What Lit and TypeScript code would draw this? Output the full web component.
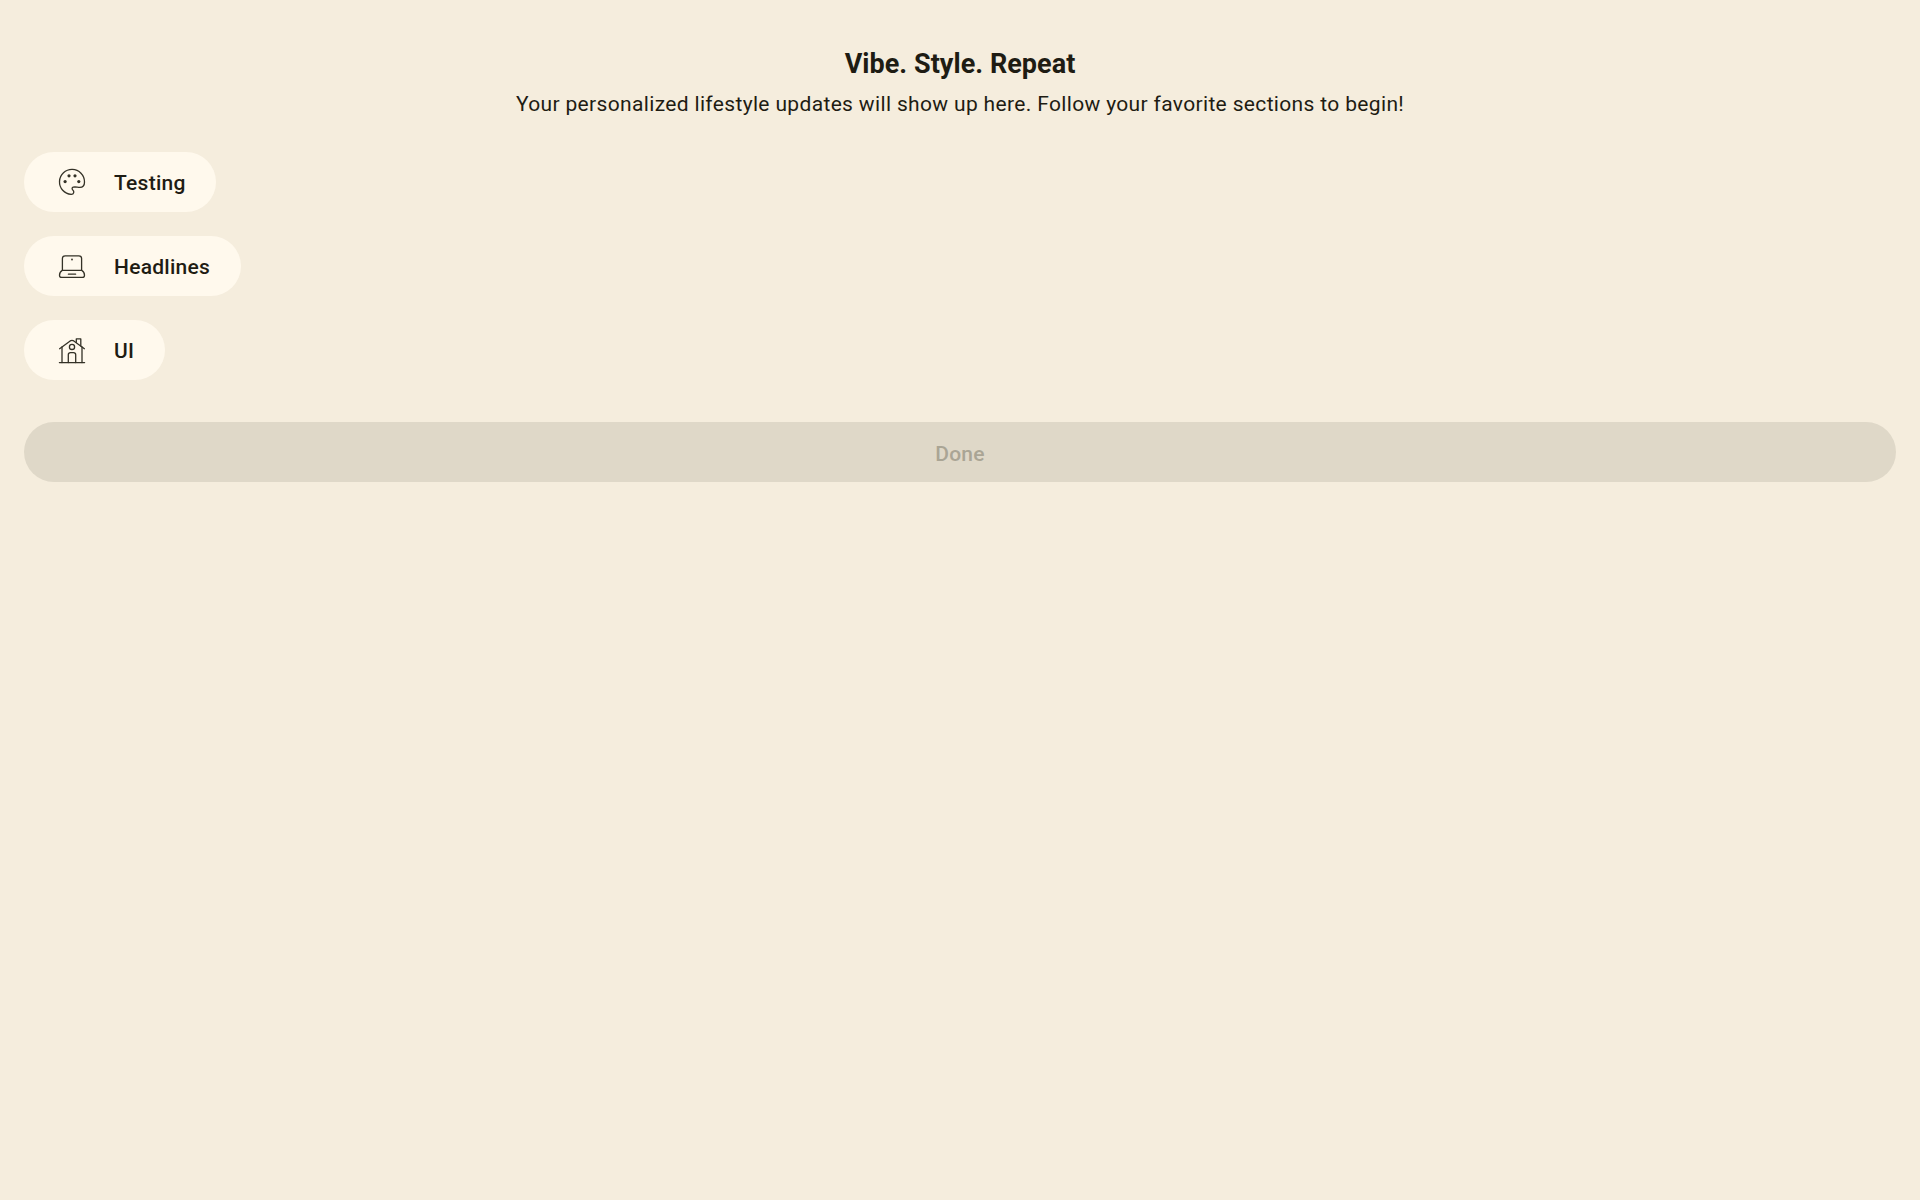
import { LitElement, html, svg, css } from "lit";
import { customElement } from "lit/decorators.js";

const palette = svg`
  <path d="M17.2 30.4A12.5 12.5 0 1 1 30.5 18C30.5 22 29 23.4 25.8 23.4C23.4 23.4 21.2 22.6 19.2 23.2C17.6 23.9 18 25.3 18.8 26C20.4 27.3 20.2 30.2 17.2 30.4Z"/>
  <g class="dots"><circle cx="11.1" cy="17.6" r="1.6"/><circle cx="15" cy="11.8" r="1.6"/><circle cx="21" cy="11.8" r="1.6"/><circle cx="24.8" cy="17.6" r="1.6"/></g>`;

const laptop = svg`
  <path d="M8.4 22.3V10.6C8.4 8.4 9.3 7.8 11.2 7.8H24.8C26.7 7.8 27.6 8.4 27.6 10.6V22.3"/>
  <path d="M8.4 22.3H27.6C29.5 23.5 30.5 25.5 30.5 27.2C30.5 28.8 29.7 29.4 28.2 29.4H7.8C6.3 29.4 5.5 28.8 5.5 27.2C5.5 25.5 6.5 23.5 8.4 22.3Z"/>
  <path d="M14.4 26.2H21.6"/>
  <g class="dots"><circle cx="18" cy="11.5" r="0.9"/></g>`;

const house = svg`
  <path d="M5.4 30.6H30.6"/>
  <path d="M8 30.5V15M28 30.5V15"/>
  <path d="M5.6 16.7L16.2 8.9Q18 7.7 19.8 8.9L30.4 16.7"/>
  <path d="M22.3 10.3V6.9H26.8V13.9"/>
  <circle cx="18" cy="14.9" r="2.6"/>
  <path d="M14.3 30.5V22.8C14.3 21.2 15 20.6 16.5 20.6H19.5C21 20.6 21.7 21.2 21.7 22.8V30.5"/>`;

const sections = [
  { label: "Testing", icon: palette },
  { label: "Headlines", icon: laptop },
  { label: "UI", icon: house },
];

@customElement("app-root")
export class AppRoot extends LitElement {
  static styles = css`
    :host {
      display: block;
      box-sizing: border-box;
      min-height: 100vh;
      padding: 46px 24px 0;
      background: #f5eddd;
      color: #1e1c13;
      font-family: Roboto, sans-serif;
    }
    .title {
      margin: 0;
      text-align: center;
      font-size: 27px;
      line-height: 36px;
      font-weight: 700;
      letter-spacing: 0.04px;
    }
    .subtitle {
      margin: 7px 0 0;
      text-align: center;
      font-size: 21px;
      line-height: 30px;
      letter-spacing: 0.345px;
    }
    .sections {
      display: flex;
      flex-direction: column;
      align-items: flex-start;
      gap: 24px;
      margin-top: 33px;
    }
    .chip,
    .done {
      display: flex;
      align-items: center;
      height: 60px;
      border: 0;
      border-radius: 30px;
      font: 500 21px/30px Roboto, sans-serif;
      letter-spacing: 0.26px;
    }
    .chip {
      gap: 24px;
      padding: 0 30.5px 0 30px;
      background: #fff9ed;
      color: #1e1c13;
    }
    .label {
      padding-top: 1px;
    }
    .icon {
      width: 36px;
      height: 36px;
      fill: none;
      stroke: #343227;
      stroke-width: 1.3;
      stroke-linecap: round;
      stroke-linejoin: round;
    }
    .icon .dots {
      fill: #343227;
      stroke: none;
    }
    .done {
      justify-content: center;
      width: 100%;
      margin-top: 42px;
      padding: 3px 0 0;
      background: #dfd8c8;
      color: #aaa595;
    }
  `;

  render() {
    return html`
      <h1 class="title">Vibe. Style. Repeat</h1>
      <p class="subtitle">Your personalized lifestyle updates will show up here. Follow your favorite sections to begin!</p>
      <div class="sections">
        ${sections.map(
          (s) => html`<button class="chip">
            <svg class="icon" viewBox="0 0 36 36">${s.icon}</svg>
            <span class="label">${s.label}</span>
          </button>`
        )}
      </div>
      <button class="done" disabled>Done</button>
    `;
  }
}
